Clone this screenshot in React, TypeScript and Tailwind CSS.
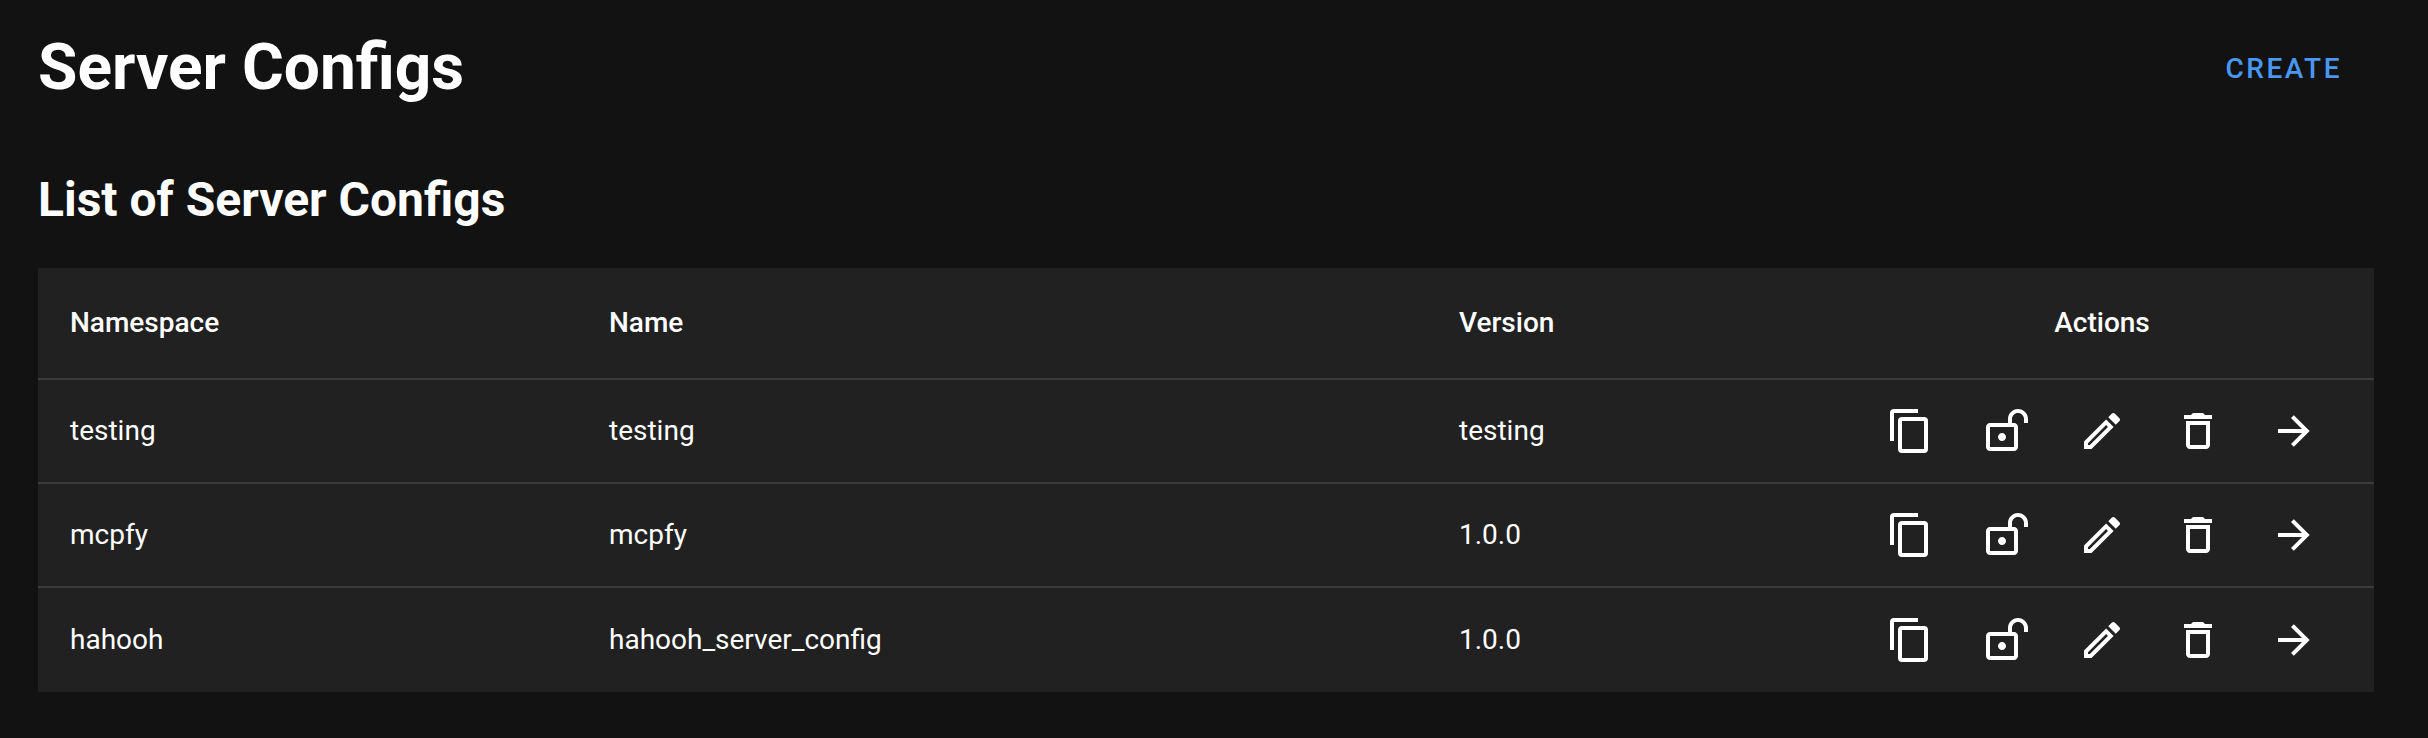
const rows = [
  ['testing', 'testing', 'testing'],
  ['mcpfy', 'mcpfy', '1.0.0'],
  ['hahooh', 'hahooh_server_config', '1.0.0'],
];

const actions = [
  { label: 'Copy', path: 'M19 21H8V7h11m0-2H8a2 2 0 0 0-2 2v14a2 2 0 0 0 2 2h11a2 2 0 0 0 2-2V7a2 2 0 0 0-2-2m-3-4H4a2 2 0 0 0-2 2v14h2V3h12z' },
  { label: 'Unlock', path: 'M18 1C15.24 1 13 3.24 13 6V8H4C2.9 8 2 8.89 2 10V20C2 21.11 2.9 22 4 22H16C17.11 22 18 21.11 18 20V10C18 8.9 17.11 8 16 8H15V6C15 4.34 16.34 3 18 3C19.66 3 21 4.34 21 6V8H23V6C23 3.24 20.76 1 18 1M10 13C11.1 13 12 13.89 12 15C12 16.11 11.11 17 10 17C8.9 17 8 16.11 8 15C8 13.9 8.9 13 10 13M16 10V20H4V10H16Z' },
  { label: 'Edit', path: 'M14.06 9.02l.92.92L5.92 19H5v-.92l9.06-9.06M17.66 3c-.25 0-.51.1-.7.29l-1.83 1.83 3.75 3.75 1.83-1.83c.39-.39.39-1.02 0-1.41l-2.34-2.34c-.2-.2-.45-.29-.71-.29zm-3.6 3.19L3 17.25V21h3.75L17.81 9.94l-3.75-3.75z' },
  { label: 'Delete', path: 'M6 19c0 1.1.9 2 2 2h8c1.1 0 2-.9 2-2V7H6v12zM8 9h8v10H8V9zm7.5-5l-1-1h-5l-1 1H5v2h14V4h-3.5z' },
  { label: 'Open', path: 'M4 11v2h12l-5.5 5.5 1.42 1.42L19.84 12l-7.92-7.92L10.5 5.5 16 11H4z' },
];

export default function App() {
  return (
    <main className="h-[738px] bg-[#121212] pl-[38px] pr-[54px] font-['Roboto',sans-serif] text-[28px] text-white antialiased">
      <header className="flex h-[136px] items-start justify-between pr-8">
        <h1 className="mt-[30px] text-[64px] font-bold leading-[75px]">Server Configs</h1>
        <button className="mt-12 text-[28px] font-medium leading-[42px] tracking-[2.5px] text-[#4997f1]">CREATE</button>
      </header>
      <h2 className="h-[132px] pt-7 text-[48px] font-bold leading-[72px]">List of Server Configs</h2>
      <table className="w-full table-fixed border-separate border-spacing-0 bg-[#212121] text-left leading-[42px]">
        <colgroup>
          <col className="w-[539px]" />
          <col className="w-[850px]" />
          <col className="w-[403px]" />
          <col />
        </colgroup>
        <thead>
          <tr>
            {['Namespace', 'Name', 'Version'].map((h) => (
              <th key={h} className="h-[112px] border-b-2 border-[#3b3b3b] px-8 py-0 font-medium">{h}</th>
            ))}
            <th className="h-[112px] border-b-2 border-[#3b3b3b] p-0 text-center font-medium">Actions</th>
          </tr>
        </thead>
        <tbody className="[&>tr:last-child>td]:border-b-0">
          {rows.map((r) => (
            <tr key={r[0]}>
              {r.map((c, i) => (
                <td key={i} className="h-[104px] border-b-2 border-[#3b3b3b] px-8 py-0">{c}</td>
              ))}
              <td className="h-[104px] border-b-2 border-[#3b3b3b] p-0">
                <div className="flex pl-8">
                  {actions.map((a) => (
                    <button key={a.label} aria-label={a.label} className="flex w-24 shrink-0 justify-center">
                      <svg viewBox="0 0 24 24" className="size-12 fill-current"><path d={a.path} /></svg>
                    </button>
                  ))}
                </div>
              </td>
            </tr>
          ))}
        </tbody>
      </table>
    </main>
  );
}
